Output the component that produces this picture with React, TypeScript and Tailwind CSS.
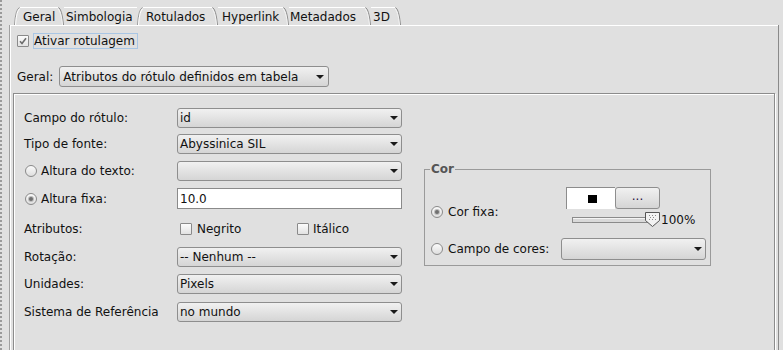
import React from "react";

type Kids = { children?: React.ReactNode; className?: string };

const Arrow = () => (
  <svg width="8" height="4" viewBox="0 0 8 4" className="shrink-0">
    <path d="M0 0h8L4 4z" fill="#1a1a1a" />
  </svg>
);

function Combo({ value, className = "" }: { value: string; className?: string }) {
  return (
    <div
      className={
        "flex shrink-0 items-center justify-between rounded-[3px] border border-[#8e8e8e] bg-linear-to-b from-[#f1f1f1] to-[#d5d5d5] " +
        className
      }
    >
      <span className="whitespace-nowrap leading-[14px]">{value}</span>
      <Arrow />
    </div>
  );
}

function Radio({ checked = false }: { checked?: boolean }) {
  return (
    <span className="flex h-[12px] w-[12px] shrink-0 items-center justify-center rounded-full border border-[#8a8a8a] bg-linear-to-b from-[#fbfbfb] to-[#dedede]">
      {checked && <span className="h-[4px] w-[4px] rounded-full bg-[#707070] shadow-[0_0_0_1px_#bdbdbd]" />}
    </span>
  );
}

function Check({ checked = false }: { checked?: boolean }) {
  return (
    <span className="flex h-[12px] w-[12px] shrink-0 items-center justify-center rounded-[1px] border border-[#8a8a8a] bg-linear-to-b from-[#fcfcfc] to-[#e2e2e2]">
      {checked && (
        <svg width="8" height="8" viewBox="0 0 8 8">
          <path d="M1 4.2l2 2.3L7 1.2" stroke="#6c6c6c" strokeWidth="1.6" fill="none" />
        </svg>
      )}
    </span>
  );
}

// tab outlines
const Sep = () => (
  <svg width="6" height="18" viewBox="0 0 6 18" className="shrink-0">
    <path d="M0.5 0.5 Q4 2 5.5 18" stroke="#8c8c8c" fill="none" />
    <path d="M-0.5 1.5 Q3 3 4.5 18" stroke="#f4f4f4" fill="none" />
  </svg>
);

const LeftEdge = () => (
  <svg width="6" height="18" viewBox="0 0 6 18" className="shrink-0">
    <path d="M0.5 18 Q1.5 2 5.5 0.5" stroke="#9a9a9a" fill="none" />
    <path d="M1.5 18 Q2.5 3 6 1.5" stroke="#ffffff" fill="none" />
  </svg>
);

function Tab({ children, className = "" }: Kids) {
  return (
    <div className={"flex h-[18px] shrink-0 items-center border-t border-white " + className}>
      <span className="whitespace-nowrap">{children}</span>
    </div>
  );
}

function FormRow({ label, children, className = "" }: Kids & { label: string }) {
  return (
    <div className={"flex h-[20px] items-center " + className}>
      <span className="w-[153px] shrink-0 whitespace-nowrap">{label}</span>
      {children}
    </div>
  );
}

export default function App() {
  return (
    <div className="flex h-[350px] w-[783px] items-start overflow-hidden bg-[#e0e0e0] font-['DejaVu_Sans',sans-serif] text-[12px] leading-[14px] text-[#111]">
      <div className="h-[350px] w-[9px] shrink-0">
        <div className="h-full w-[2px] border-l-2 border-dotted border-[#9a9a9a]" />
      </div>

      <div className="flex h-[400px] w-[770px] shrink-0 flex-col">
        <div className="flex h-[25px] shrink-0 items-end pl-[5px]">
          <LeftEdge />
          <Tab className="w-[38px] pl-[3px]">Geral</Tab>
          <Sep />
          <Tab className="w-[73px] pl-[2px]">Simbologia</Tab>
          <LeftEdge />
          <Tab className="w-[69px] pl-[3px]">Rotulados</Tab>
          <Sep />
          <Tab className="w-[65px] pl-[4px]">Hyperlink</Tab>
          <Sep />
          <Tab className="w-[76px] pl-[1px]">Metadados</Tab>
          <Sep />
          <Tab className="w-[24px] pl-[2px]">3D</Tab>
          <Sep />
        </div>

        <div className="flex min-h-0 flex-1 border-l border-r border-l-[#a0a0a0] border-r-[#8a8a8a]">
          <div className="flex flex-1 flex-col border-l border-t border-white">
            <div className="mt-[7px] ml-[6px] flex h-[16px] items-center">
              <Check checked />
              <span className="ml-[4px] h-[16px] w-[105px] border border-[#a9c6e4]">Ativar rotulagem</span>
            </div>

            <div className="mt-[17px] ml-[6px] flex h-[21px] items-center">
              <span>Geral:</span>
              <Combo
                value="Atributos do rótulo definidos em tabela"
                className="ml-[6px] h-[21px] w-[270px] pl-[3px] pr-[4px]"
              />
            </div>

            <div className="mt-[6px] ml-[2px] w-[762px] flex-1 border border-[#8c8c8c] shadow-[1px_1px_0_#fff,inset_1px_1px_0_#fff]">
              <div className="flex items-start pl-[10px] pt-[14px]">
                <div className="flex flex-col">
                  <FormRow label="Campo do rótulo:">
                    <Combo value="id" className="h-[20px] w-[225px] pl-[2px] pr-[3px]" />
                  </FormRow>
                  <FormRow label="Tipo de fonte:" className="mt-[6px]">
                    <Combo value="Abyssinica SIL" className="h-[20px] w-[225px] pl-[2px] pr-[3px]" />
                  </FormRow>
                  <div className="mt-[7px] flex h-[20px] items-center">
                    <div className="flex w-[153px] shrink-0 items-center pl-[1px]">
                      <Radio />
                      <span className="ml-[4px] whitespace-nowrap">Altura do texto:</span>
                    </div>
                    <Combo value="" className="h-[20px] w-[225px] pl-[2px] pr-[3px]" />
                  </div>
                  <div className="mt-[7px] flex h-[21px] items-center">
                    <div className="flex w-[153px] shrink-0 items-center pl-[1px]">
                      <Radio checked />
                      <span className="ml-[4px] whitespace-nowrap">Altura fixa:</span>
                    </div>
                    <div className="flex h-[21px] w-[225px] items-center border border-[#8a8a8a] bg-white pl-[2px]">
                      10.0
                    </div>
                  </div>
                  <div className="mt-[10px] flex h-[20px] items-center">
                    <span className="w-[156px] shrink-0">Atributos:</span>
                    <div className="flex w-[117px] shrink-0 items-center">
                      <Check />
                      <span className="ml-[5px]">Negrito</span>
                    </div>
                    <Check />
                    <span className="ml-[4px]">Itálico</span>
                  </div>
                  <FormRow label="Rotação:" className="mt-[8px]">
                    <Combo value="-- Nenhum --" className="h-[20px] w-[225px] pl-[2px] pr-[3px]" />
                  </FormRow>
                  <FormRow label="Unidades:" className="mt-[7px]">
                    <Combo value="Pixels" className="h-[20px] w-[225px] pl-[2px] pr-[3px]" />
                  </FormRow>
                  <FormRow label="Sistema de Referência" className="mt-[8px]">
                    <Combo value="no mundo" className="h-[20px] w-[225px] pl-[2px] pr-[3px]" />
                  </FormRow>
                </div>

                <div className="relative ml-[22px] mt-[61px] w-[287px] border border-[#9a9a9a] pb-[5px] pl-[6px] pt-[17px]">
                  <span className="absolute -top-[8px] left-[5px] bg-[#e0e0e0] px-[1px] font-bold text-[#555]">Cor</span>
                  <div className="flex">
                    <div className="mt-[18px] flex h-[14px] w-[135px] shrink-0 items-center">
                      <Radio checked />
                      <span className="ml-[5px]">Cor fixa:</span>
                    </div>
                    <div className="flex flex-col">
                      <div className="flex h-[22px]">
                        <div className="flex w-[49px] items-center justify-center border-l border-t border-[#8c8c8c] bg-white">
                          <span className="ml-[2px] h-[8px] w-[9px] bg-black" />
                        </div>
                        <div className="flex w-[45px] items-center justify-center rounded-[3px] border border-[#8e8e8e] bg-linear-to-b from-[#f1f1f1] to-[#d5d5d5] pb-[4px] text-[#2a1040]">
                          ...
                        </div>
                      </div>
                      <div className="mt-[3px] flex h-[15px] items-center pl-[6px]">
                        <div className="h-[6px] w-[78px] border border-[#8a8a8a] bg-[#d9d9d9] shadow-[inset_0_1px_0_#f4f4f4]" />
                        <svg width="15" height="15" viewBox="0 0 15 15" className="-ml-[5px] shrink-0">
                          <path d="M0.5 0.5h14v8l-7 6l-7-6z" fill="#f2f2f2" stroke="#555" />
                          <g fill="#8a8a8a">
                            <rect x="4" y="3" width="1" height="1" />
                            <rect x="7" y="3" width="1" height="1" />
                            <rect x="10" y="3" width="1" height="1" />
                            <rect x="5" y="5" width="1" height="1" />
                            <rect x="8" y="5" width="1" height="1" />
                            <rect x="4" y="7" width="1" height="1" />
                            <rect x="7" y="7" width="1" height="1" />
                            <rect x="10" y="7" width="1" height="1" />
                          </g>
                        </svg>
                        <span className="ml-px">100%</span>
                      </div>
                    </div>
                  </div>
                  <div className="mt-[11px] flex h-[22px] items-center">
                    <div className="flex w-[130px] shrink-0 items-center">
                      <Radio />
                      <span className="ml-[5px] whitespace-nowrap">Campo de cores:</span>
                    </div>
                    <Combo value="" className="h-[22px] w-[145px] pl-[2px] pr-[3px]" />
                  </div>
                </div>
              </div>
            </div>
          </div>
        </div>
      </div>
    </div>
  );
}
